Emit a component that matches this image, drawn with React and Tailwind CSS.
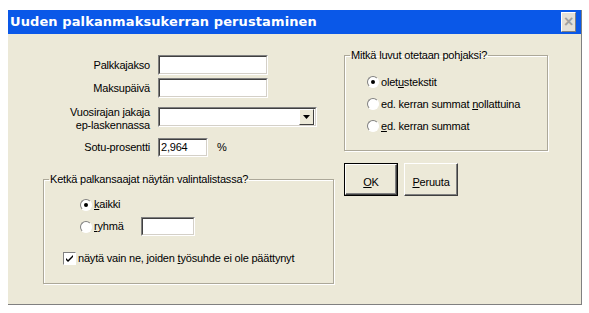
import React from 'react';

const font = { fontFamily: '"Liberation Sans", Arial, sans-serif' };

function Sunken({ className = '', children }) {
  return (
    <div className={`bg-white border border-t-[#808080] border-l-[#808080] border-b-white border-r-white ${className}`}>
      <div className="h-full border border-t-[#404040] border-l-[#404040] border-b-[#d4d0c8] border-r-[#d4d0c8] flex items-center">
        {children}
      </div>
    </div>
  );
}

function Radio({ checked }) {
  return (
    <span className="relative w-[12px] h-[12px] shrink-0 rounded-full bg-white border border-t-[#808080] border-l-[#808080] border-b-white border-r-white">
      {checked && <span className="absolute left-[3px] top-[3px] w-[4px] h-[4px] rounded-full bg-black" />}
    </span>
  );
}

function U({ children }) {
  return <span className="underline underline-offset-[1px]">{children}</span>;
}

function Group({ label, className = '', children }) {
  return (
    <fieldset className={`border border-[#aca899] shadow-[inset_1px_1px_0_#fff,1px_1px_0_#fff] ${className}`}>
      <legend className="ml-[5px] px-[1px] leading-[13px]">{label}</legend>
      {children}
    </fieldset>
  );
}

function Button({ def, children }) {
  return (
    <div className={`w-[54px] h-[33px] ${def ? 'border border-black' : ''}`}>
      <div className="h-full flex items-center justify-center pt-[5px] border border-t-white border-l-white border-b-[#404040] border-r-[#404040] bg-[#ece9d8] shadow-[inset_-1px_-1px_0_#808080]">
        {children}
      </div>
    </div>
  );
}

export default function App() {
  return (
    <div className="bg-white w-[589px] h-[313px] pt-[10px] pl-[8px] text-[11px] tracking-[-0.2px] text-black" style={font}>
      <div className="w-[574px] h-[295px] flex flex-col bg-[#ece9d8] border-r border-b border-r-[#808080] border-b-[#808080]">
        <div className="h-[24px] shrink-0 bg-[#0a58e8] flex items-center justify-between pl-[2px] pr-[5px]">
          <span className="text-white font-bold text-[13px] tracking-[0.1px]" style={{ fontFamily: '"DejaVu Sans", Verdana, sans-serif' }}>
            Uuden palkanmaksukerran perustaminen
          </span>
          <span className="w-[15px] h-[20px] bg-[#e4e0d8] border border-t-white border-l-white border-b-[#808080] border-r-[#808080] flex items-center justify-center text-[#a0a0a0] text-[16px] leading-none font-bold">
            ×
          </span>
        </div>

        <div className="flex">
          <div className="w-[336px] pt-[21px]">
            <div className="flex items-center">
              <span className="w-[142px] text-right">Palkkajakso</span>
              <Sunken className="ml-[8px] w-[110px] h-[20px]" />
            </div>
            <div className="flex items-center mt-[3px]">
              <span className="w-[142px] text-right">Maksupäivä</span>
              <Sunken className="ml-[8px] w-[110px] h-[20px]" />
            </div>
            <div className="flex items-start mt-[8px]">
              <span className="w-[142px] text-right leading-[13px]">
                Vuosirajan jakaja
                <br />
                ep-laskennassa
              </span>
              <Sunken className="ml-[8px] mt-[1px] w-[159px] h-[20px]">
                <div className="flex-1" />
                <div className="w-[15px] h-[16px] mr-[1px] bg-[#ece9d8] border border-t-white border-l-white border-b-[#404040] border-r-[#404040] flex items-center justify-center">
                  <svg width="7" height="4" viewBox="0 0 7 4"><path d="M0 0h7L3.5 4z" fill="#000" /></svg>
                </div>
              </Sunken>
            </div>
            <div className="flex items-center mt-[6px]">
              <span className="w-[142px] text-right">Sotu-prosentti</span>
              <Sunken className="ml-[8px] w-[50px] h-[19px]">
                <span className="pl-[1px]">2,964</span>
              </Sunken>
              <span className="ml-[9px]">%</span>
            </div>

            <Group label="Ketkä palkansaajat näytän valintalistassa?" className="ml-[35px] mt-[16px] w-[291px] h-[111px]">
              <div className="pl-[36px] mt-[12px] flex items-center gap-[2px] h-[13px]">
                <Radio checked />
                <span><U>k</U>aikki</span>
              </div>
              <div className="pl-[36px] mt-[6px] flex items-center gap-[2px]">
                <Radio />
                <span><U>r</U>yhmä</span>
                <Sunken className="ml-[15px] w-[54px] h-[19px]" />
              </div>
              <div className="pl-[19px] mt-[14px] flex items-center gap-[2px]">
                <span className="relative w-[13px] h-[13px] bg-white border border-t-[#808080] border-l-[#808080] border-b-white border-r-white">
                  <svg className="absolute left-[1px] top-[1px]" width="9" height="9" viewBox="0 0 9 9">
                    <path d="M1 4l2 2 5-5v2L3 8 1 6z" fill="#000" />
                  </svg>
                </span>
                <span>näytä vain ne, joiden <U>t</U>yösuhde ei ole päättynyt</span>
              </div>
            </Group>
          </div>

          <div className="w-[204px] pt-[15px]">
            <Group label="Mitkä luvut otetaan pohjaksi?" className="h-[102px]">
              <div className="pl-[22px] mt-[12px] flex items-center gap-[2px]">
                <Radio checked />
                <span>olet<U>u</U>stekstit</span>
              </div>
              <div className="pl-[22px] mt-[5px] flex items-center gap-[2px]">
                <Radio />
                <span>ed. kerran summat <U>n</U>ollattuina</span>
              </div>
              <div className="pl-[22px] mt-[6px] flex items-center gap-[2px]">
                <Radio />
                <span><U>e</U>d. kerran summat</span>
              </div>
            </Group>
            <div className="flex gap-[6px] mt-[12px]">
              <Button def><span><U>O</U>K</span></Button>
              <Button><span><U>P</U>eruuta</span></Button>
            </div>
          </div>
        </div>
      </div>
    </div>
  );
}
